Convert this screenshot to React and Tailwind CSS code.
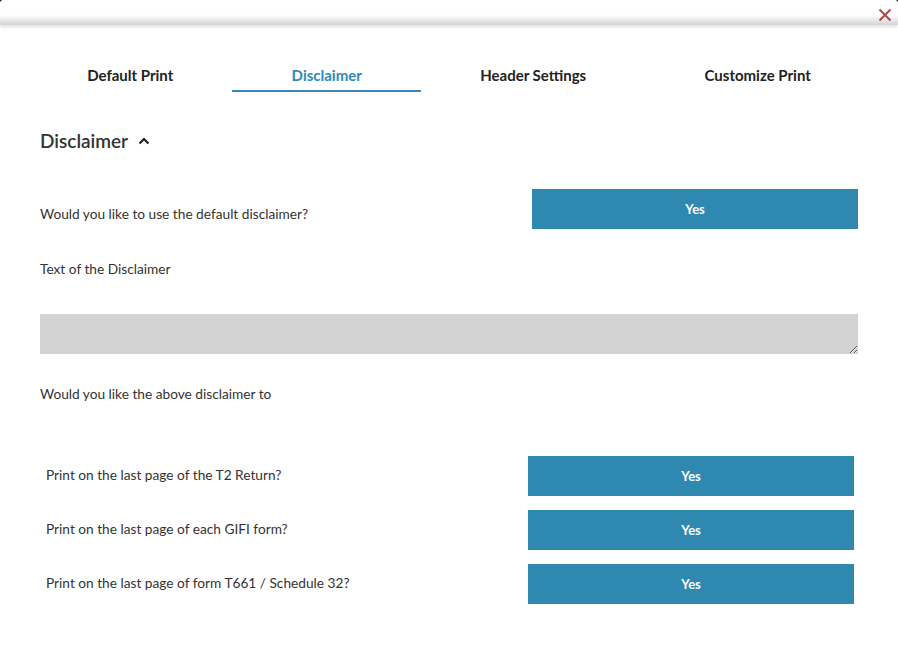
import { useState } from 'react';

const tabs = ['Default Print', 'Disclaimer', 'Header Settings', 'Customize Print'];

const options = [
  'Print on the last page of the T2 Return?',
  'Print on the last page of each GIFI form?',
  'Print on the last page of form T661 / Schedule 32?',
];

function YesButton({ className }) {
  return (
    <button className={`h-10 w-[326px] bg-[#2e88b0] text-white text-[13px] font-bold ${className || ''}`}>
      Yes
    </button>
  );
}

export default function App() {
  const [active, setActive] = useState(1);

  return (
    <div className="w-[898px] h-[655px] bg-[#222] font-['Lato','Liberation_Sans',sans-serif] text-[#333]">
      <div className="h-full bg-white rounded-t-[4px] overflow-hidden flex flex-col">
        <div className="h-[25px] flex justify-end items-start bg-gradient-to-b from-white from-60% to-[#d4d4d4] shadow-[0_2px_3px_rgba(0,0,0,0.12)]">
          <button className="w-[26px] h-[25px] pt-[4px] flex items-center justify-center text-[#b04a48]">
            <svg width="14" height="14" viewBox="0 0 14 14" fill="none" stroke="currentColor" strokeWidth="2">
              <path d="M1.5 1.5 L12.5 12.5 M12.5 1.5 L1.5 12.5" />
            </svg>
          </button>
        </div>

        <div className="flex mx-[28px] mt-[35px]">
          {tabs.map((t, i) => (
            <button
              key={t}
              onClick={() => setActive(i)}
              className={`flex-auto px-4 h-[32px] text-[15px] font-bold border-b-2 ${
                i === active ? 'text-[#2f8ab8] border-[#3d87bd]' : 'text-[#222] border-transparent'
              }`}
            >
              {t}
            </button>
          ))}
        </div>

        <div className="px-[40px] text-[13.7px] leading-5">
          <div className="mt-[35px] flex items-center gap-[10px] text-[19px] leading-7 font-semibold text-[#333]">
            Disclaimer
            <svg width="12" height="8" viewBox="0 0 12 8" fill="none" stroke="#222" strokeWidth="2.2">
              <path d="M1.5 6.5 L6 2 L10.5 6.5" />
            </svg>
          </div>

          <div className="mt-[34px] flex items-center justify-between">
            <span className="pt-[9px]">Would you like to use the default disclaimer?</span>
            <YesButton />
          </div>

          <div className="mt-[30px]">Text of the Disclaimer</div>

          <textarea className="mt-[35px] block w-full h-10 bg-[#d3d3d3] outline-none" />

          <div className="mt-[30px]">Would you like the above disclaimer to</div>

          <div className="mt-[52px] flex flex-col gap-[14px] pl-[6px] pr-[4px]">
            {options.map((o) => (
              <div key={o} className="flex items-center justify-between">
                <span className="-mt-[3px]">{o}</span>
                <YesButton />
              </div>
            ))}
          </div>
        </div>
      </div>
    </div>
  );
}
